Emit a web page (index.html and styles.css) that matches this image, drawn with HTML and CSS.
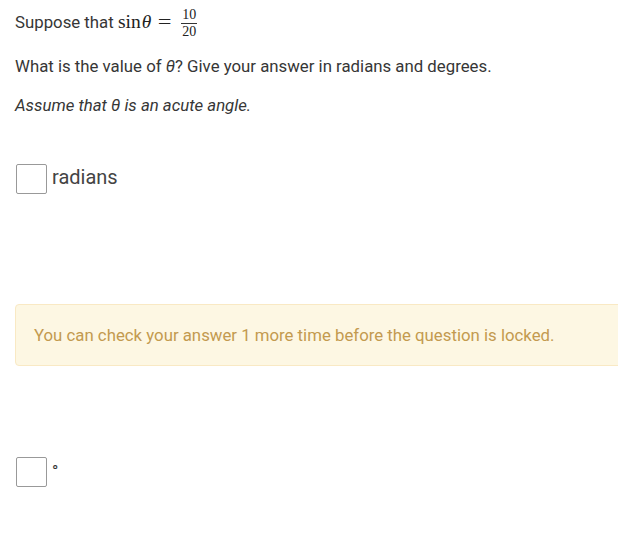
FILE: index.html
```html
<!DOCTYPE html>
<html>
<head>
<meta charset="utf-8">
<link rel="stylesheet" href="styles.css">
</head>
<body>
<div class="page">
  <p class="line first">Suppose that <span class="math"><span class="rm">sin</span><span class="it">θ</span><span class="eq">=</span><span class="frac"><span class="num">10</span><span class="den">20</span></span></span></p>
  <p class="line second">What is the value of <span class="th">θ</span>? Give your answer in radians and degrees.</p>
  <p class="line italic">Assume that θ is an acute angle.</p>
  <div class="answer rad">
    <span class="box"></span><span class="unit">radians</span>
  </div>
  <div class="alert">You can check your answer 1 more time before the question is locked.</div>
  <div class="answer deg">
    <span class="box"></span><span class="degsym">°</span>
  </div>
</div>
</body>
</html>
```

FILE: styles.css
```css
html, body {
  margin: 0;
  padding: 0;
  background: #fff;
}
body {
  font-family: Roboto, "Liberation Sans", sans-serif;
  color: #363636;
  font-size: 16.8px;
  overflow: hidden;
}
.page {
  padding: 0 0 0 15px;
}
.line {
  margin: 0;
  line-height: 24px;
}
.first {
  padding-top: 8px;
  height: 36px;
}
.line + .line {
  margin-top: 15px;
}
.first + .second {
  margin-top: 10px;
}
.italic {
  font-style: italic;
}
.math {
  font-family: "Liberation Serif", "DejaVu Serif", serif;
  font-size: 19.5px;
  color: #222;
  line-height: 0;
}
.math .it {
  font-style: italic;
  margin-left: 1px;
}
.math .eq {
  display: inline-block;
  margin: 0 9px 0 8px;
  transform: scaleX(1.25);
}
.frac {
  display: inline-flex;
  flex-direction: column;
  align-items: center;
  vertical-align: 9px;
  font-size: 14px;
  line-height: 13px;
  margin-left: 2px;
}
.frac .num {
  border-bottom: 1px solid #333;
  padding: 0 1px 2px;
}
.frac .den {
  padding-top: 1px;
}
.th {
  font-style: italic;
}
.answer {
  display: flex;
  align-items: center;
}
.rad {
  margin-top: 47px;
}
.box {
  width: 29px;
  height: 28px;
  margin-left: 1px;
  border: 1px solid #999;
  border-radius: 2px;
  background: #fff;
  box-sizing: content-box;
}
.unit {
  font-size: 20px;
  margin-left: 5px;
  color: #444;
  position: relative;
  top: -2px;
}
.alert {
  margin-top: 110px;
  margin-right: -20px;
  height: 62px;
  box-sizing: border-box;
  padding: 0 18px;
  display: flex;
  align-items: center;
  background: #fdf7e3;
  border: 1px solid #f9e9c4;
  border-radius: 4px;
  color: #c39a4f;
  font-size: 16.8px;
}
.deg {
  margin-top: 91px;
  align-items: flex-start;
}
.degsym {
  font-size: 17px;
  margin-left: 5px;
  margin-top: 6px;
  line-height: 17px;
  color: #333;
}
```
